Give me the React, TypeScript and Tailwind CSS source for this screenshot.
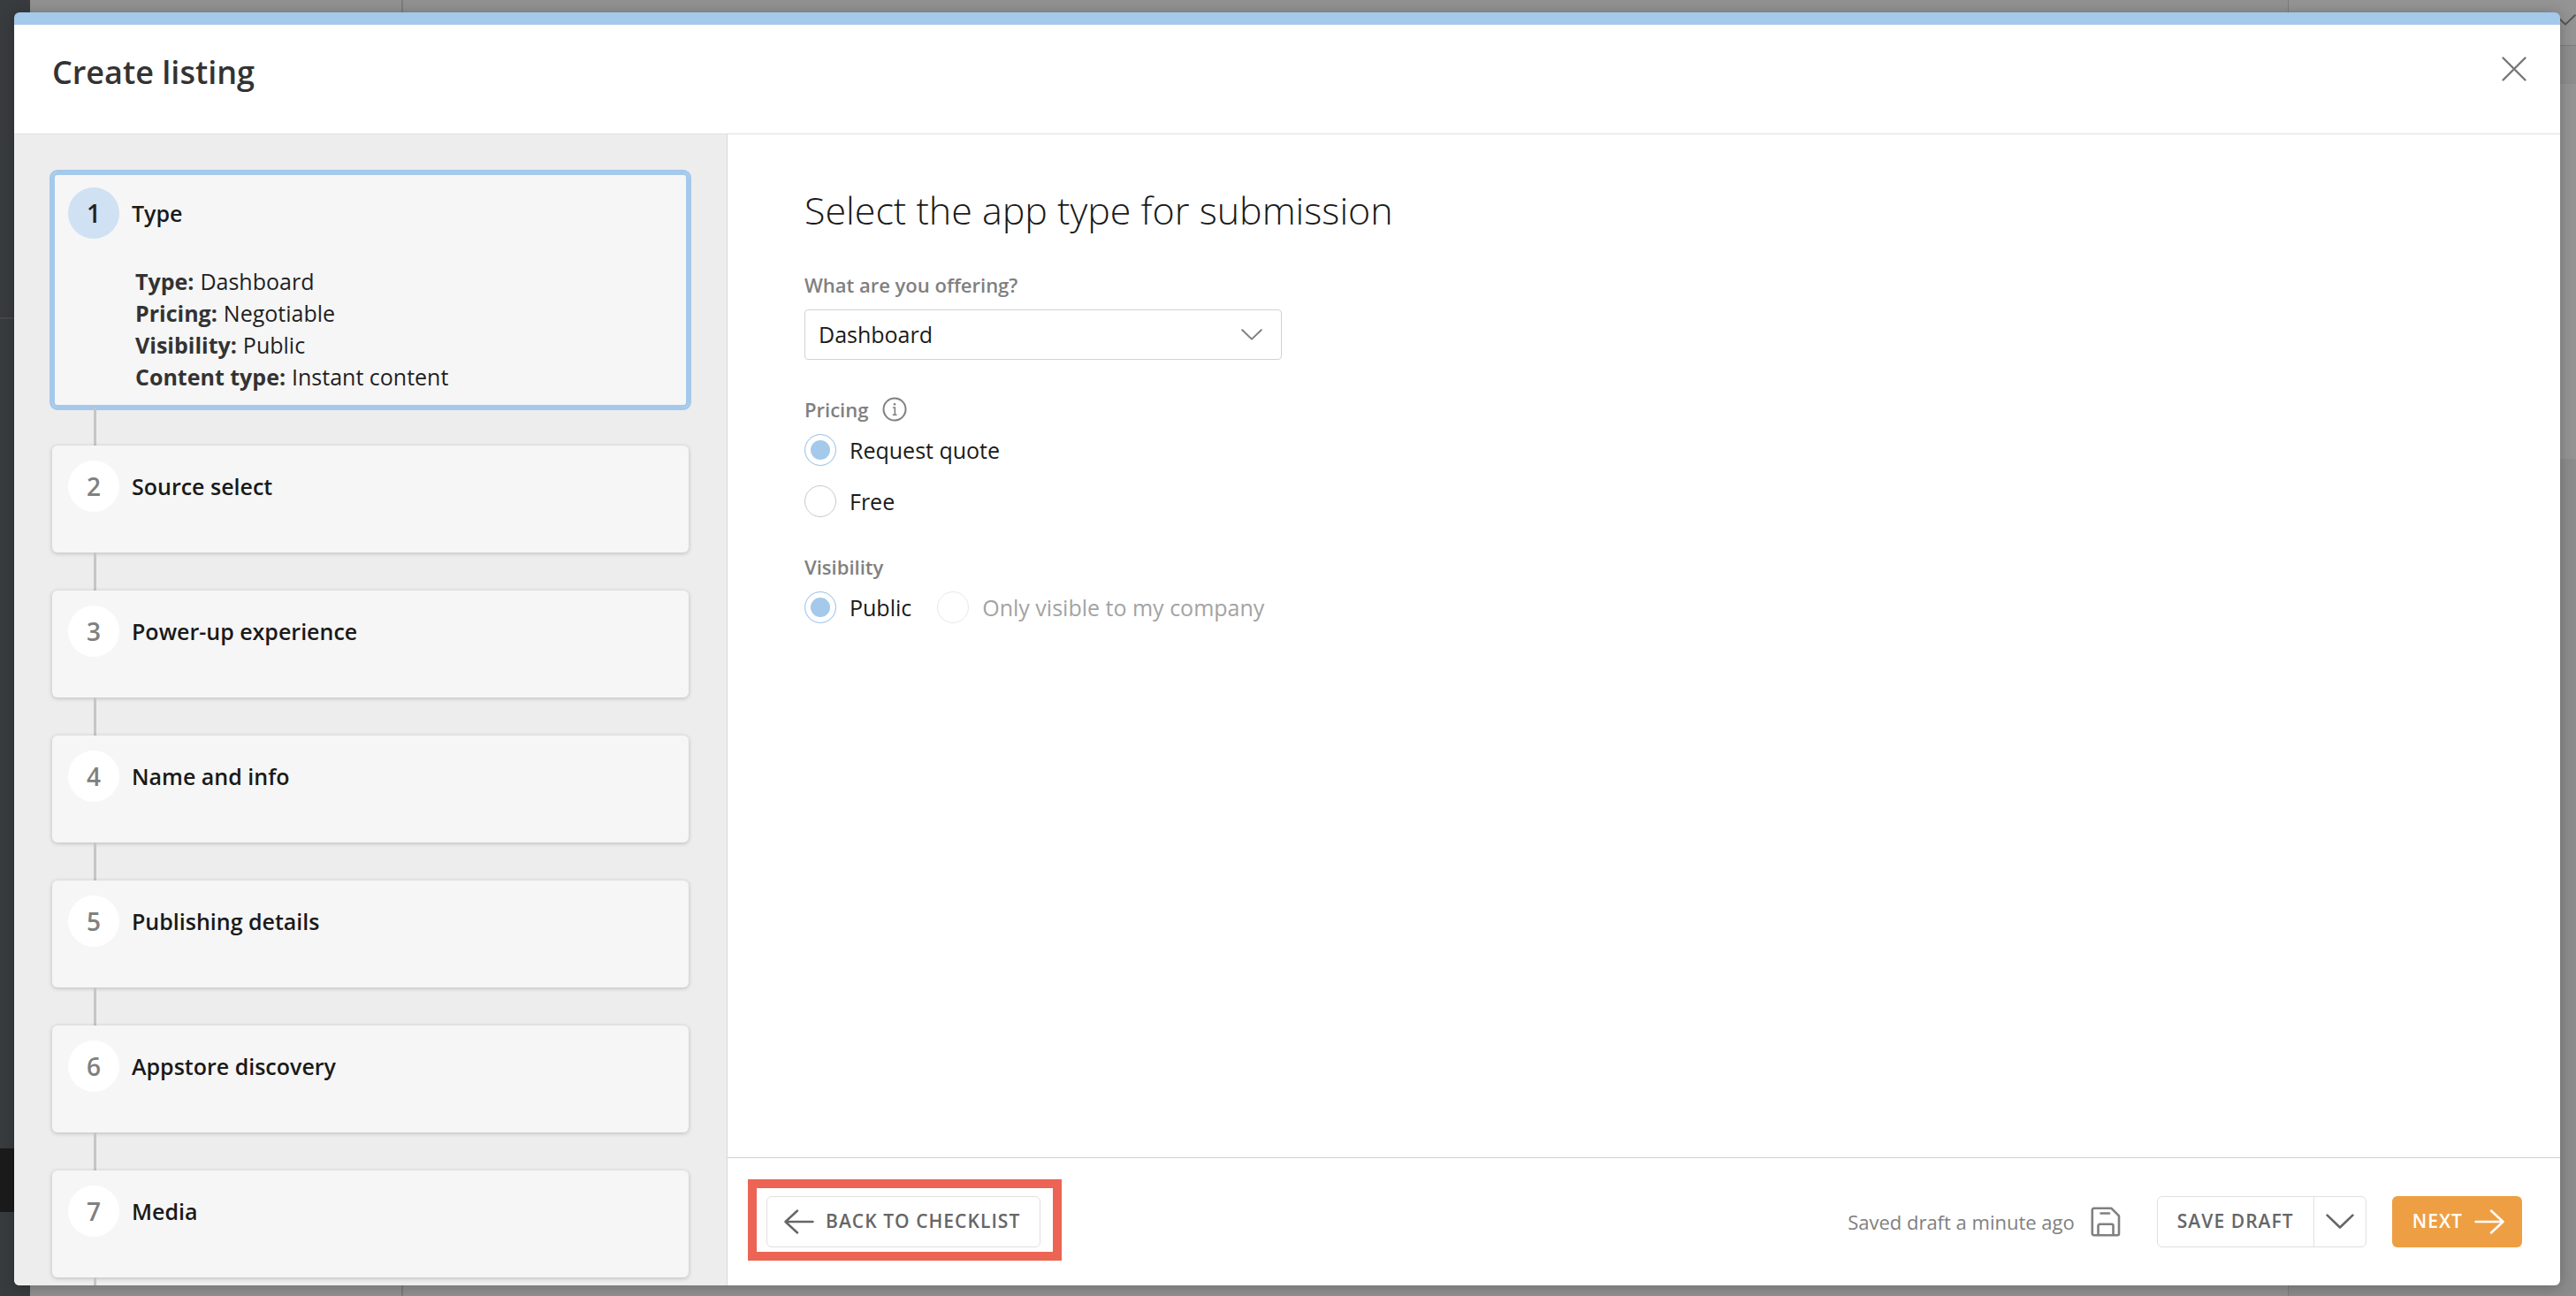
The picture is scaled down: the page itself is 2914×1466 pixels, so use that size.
import { useState, type ReactNode } from "react";

const steps = [
  "Type",
  "Source select",
  "Power-up experience",
  "Name and info",
  "Publishing details",
  "Appstore discovery",
  "Media",
];

const summary = [
  ["Type:", "Dashboard"],
  ["Pricing:", "Negotiable"],
  ["Visibility:", "Public"],
  ["Content type:", "Instant content"],
];

function Chevron({ className }: { className: string }) {
  return (
    <svg viewBox="0 0 30 16" fill="none" stroke="currentColor" strokeWidth="2.5" strokeLinecap="round" strokeLinejoin="round" className={className} aria-hidden="true">
      <path d="M1.5 1.5 15 14.5 28.5 1.5" />
    </svg>
  );
}

function Arrow({ className }: { className: string }) {
  return (
    <svg viewBox="0 0 34 28" fill="none" stroke="currentColor" strokeWidth="2.5" strokeLinecap="round" strokeLinejoin="round" className={className} aria-hidden="true">
      <path d="M1.5 14H32.5M19 1.5 32.5 14 19 26.5" />
    </svg>
  );
}

function InfoIcon() {
  return (
    <svg viewBox="0 0 28 28" fill="none" stroke="currentColor" strokeWidth="2" strokeLinecap="round" className="size-7" aria-hidden="true">
      <circle cx="14" cy="14" r="12.5" />
      <path d="M12.5 12H14.3V20M12.3 20.2H16" strokeWidth="1.6" />
      <circle cx="14" cy="8.3" r="1.3" fill="currentColor" stroke="none" />
    </svg>
  );
}

function DiskIcon() {
  return (
    <svg viewBox="0 0 34 34" fill="none" stroke="currentColor" strokeWidth="2.6" strokeLinecap="round" strokeLinejoin="round" className="size-[34px]" aria-hidden="true">
      <path d="M3.5 1.8H23.5L32 10.3V30.5a1.7 1.7 0 0 1-1.7 1.7H3.5a1.7 1.7 0 0 1-1.7-1.7V3.5a1.7 1.7 0 0 1 1.7-1.7Z" />
      <path d="M8.5 32V21.5a1.7 1.7 0 0 1 1.7-1.7H23.8a1.7 1.7 0 0 1 1.7 1.7V32M11.5 7.5H21" />
    </svg>
  );
}

function Backdrop() {
  return (
    <div className="flex h-full" aria-hidden="true">
      <div className="flex w-[34px] flex-col bg-[#383c3f]">
        <div className="h-[361px] border-b-2 border-[#46494c]" />
        <div className="flex-1" />
        <div className="h-[72px] bg-[#1b1b1b]" />
        <div className="h-[95px]" />
      </div>
      <div className="w-[422px] border-r-2 border-[#7d7d7d] bg-[#919191]" />
      <div className="flex-1 bg-[#919191]" />
      <div className="flex w-[326px] flex-col border-l border-[#7d7d7d] bg-[#949494]">
        <div className="flex h-[52px] items-start justify-end border-b border-[#7d7d7d] pt-4">
          <Chevron className="w-6 text-[#555]" />
        </div>
        <div className="h-[43px] bg-[#8d8d8d]" />
        <div className="h-[424px]" />
        <div className="flex-1 bg-[#8c8c8c]" />
      </div>
    </div>
  );
}

function Radio({ name, label, checked, disabled, onSelect }: { name: string; label: string; checked: boolean; disabled?: boolean; onSelect?: () => void }) {
  return (
    <label className="flex items-center gap-[15px] text-[25px] leading-9 text-[#1a1a1a] has-disabled:text-[#a3a3a3]">
      <input
        type="radio"
        name={name}
        checked={checked}
        disabled={disabled}
        onChange={() => onSelect?.()}
        className="size-9 shrink-0 appearance-none rounded-full border border-[#c8c8c8] bg-white checked:border-[#a4c9eb] checked:bg-[#a4c9eb] checked:shadow-[inset_0_0_0_6px_white] disabled:border-[#e8e8e8]"
      />
      {label}
    </label>
  );
}

function Step({ index, title, active, children }: { index: number; title: string; active?: boolean; children?: ReactNode }) {
  return (
    <li>
      <div
        aria-current={active ? "step" : undefined}
        className={
          active
            ? "rounded-md bg-[#f6f6f6] px-[18px] pt-[17px] pb-[17px] ring-3 ring-[#a4c9eb] inset-ring-3 inset-ring-[#a4c9eb]"
            : "min-h-[121px] rounded-md bg-[#f6f6f6] px-[18px] pt-[17px] shadow-[0_1px_5px_rgba(0,0,0,0.22)]"
        }
      >
        <div className="flex items-center gap-[14px]">
          <span
            className={
              active
                ? "flex size-[58px] items-center justify-center rounded-full bg-[#cfe1f2] text-[28px] font-semibold text-[#222]"
                : "flex size-[58px] items-center justify-center rounded-full bg-white text-[28px] font-semibold text-[#808080]"
            }
          >
            {index}
          </span>
          <h2 className="text-[25px] leading-9 font-semibold text-[#1a1a1a]">{title}</h2>
        </div>
        {children}
      </div>
      <div className="ml-[47px] h-[43px] w-[3px] bg-[#c6c6c6]" />
    </li>
  );
}

export default function App() {
  const [offer, setOffer] = useState("Dashboard");
  const [pricing, setPricing] = useState("quote");

  return (
    <div className="relative h-screen overflow-hidden font-['Open_Sans',sans-serif]">
      <Backdrop />
      <div role="dialog" aria-labelledby="dialog-title" className="absolute top-3.5 right-[18px] bottom-3 left-4 flex flex-col overflow-hidden rounded-md border-t-[14px] border-[#a4c9eb] bg-white shadow-[0_2px_16px_rgba(0,0,0,0.25)]">
        <header className="flex h-[124px] shrink-0 items-start justify-between border-b border-[#dfdfdf] pt-[29px] pr-[37px] pl-[43px]">
          <h1 id="dialog-title" className="text-[36px] leading-[50px] font-semibold text-[#333]">Create listing</h1>
          <button type="button" aria-label="Close" className="mt-1.5 text-[#777]">
            <svg viewBox="0 0 30 30" fill="none" stroke="currentColor" strokeWidth="2.4" strokeLinecap="round" className="size-[30px]">
              <path d="M2.5 2.5 27.5 27.5M27.5 2.5 2.5 27.5" />
            </svg>
          </button>
        </header>

        <div className="flex min-h-0 flex-1">
          <nav aria-label="Steps" className="w-[807px] shrink-0 overflow-hidden border-r border-[#d9d9d9] bg-[#ededed] px-[43px] pt-[43px]">
            <ol>
              {steps.map((title, i) => (
                <Step key={title} index={i + 1} title={title} active={i === 0}>
                  {i === 0 && (
                    <dl className="mt-[30px] pl-[76px] text-[25px] leading-9 text-[#1f1f1f]">
                      {summary.map(([term, value]) => (
                        <div key={term} className="flex gap-[7px]">
                          <dt className="font-bold text-[#333]">{term}</dt>
                          <dd>{value}</dd>
                        </div>
                      ))}
                    </dl>
                  )}
                </Step>
              ))}
            </ol>
          </nav>

          <div className="flex min-w-0 flex-1 flex-col">
            <main className="flex-1 px-[87px] pt-14">
              <h2 className="text-[43px] leading-[60px] font-light text-[#1a1a1a]">Select the app type for submission</h2>

              <label htmlFor="offer" className="mt-[38px] block text-[22px] leading-8 font-semibold text-[#808080]">What are you offering?</label>
              <div className="relative mt-3 w-[540px]">
                <select
                  id="offer"
                  value={offer}
                  onChange={(e) => setOffer(e.target.value)}
                  className="h-[57px] w-full appearance-none rounded-sm border border-[#d2d2d2] bg-white px-[15px] text-[25px] text-[#1a1a1a]"
                >
                  <option>Dashboard</option>
                </select>
                <Chevron className="pointer-events-none absolute top-[22px] right-[22px] w-6 text-[#808080]" />
              </div>

              <fieldset className="mt-10">
                <legend className="flex items-center gap-4 text-[22px] leading-8 font-semibold text-[#808080]">
                  Pricing
                  <InfoIcon />
                </legend>
                <div className="mt-3 flex flex-col gap-[22px]">
                  <Radio name="pricing" label="Request quote" checked={pricing === "quote"} onSelect={() => setPricing("quote")} />
                  <Radio name="pricing" label="Free" checked={pricing === "free"} onSelect={() => setPricing("free")} />
                </div>
              </fieldset>

              <fieldset className="mt-10">
                <legend className="text-[22px] leading-8 font-semibold text-[#808080]">Visibility</legend>
                <div className="mt-3 flex gap-[29px]">
                  <Radio name="visibility" label="Public" checked />
                  <Radio name="visibility" label="Only visible to my company" checked={false} disabled />
                </div>
              </fieldset>
            </main>

            <footer className="flex h-[145px] shrink-0 items-start justify-between border-t border-[#d2d2d2] pt-6 pr-[43px] pl-[23px]">
              <div className="border-10 border-[#ec6454] pt-[9px] pr-[14px] pb-[5px] pl-[11px]">
                <button type="button" className="flex h-[58px] items-center gap-[13px] rounded-md border border-[#e0e0e0] pr-[22px] pl-[19px] text-[21px] font-semibold tracking-wider text-[#666]">
                  <Arrow className="w-[34px] rotate-180" />
                  BACK TO CHECKLIST
                </button>
              </div>

              <div className="mt-[19px] flex items-center">
                <p className="mr-[18px] text-[22px] text-[#808080]">Saved draft a minute ago</p>
                <span className="mr-[41px] text-[#808080]">
                  <DiskIcon />
                </span>
                <div className="mr-[29px] flex h-[58px] rounded-md border border-[#e0e0e0] text-[#666]">
                  <button type="button" className="px-[22px] text-[21px] font-semibold tracking-wider">SAVE DRAFT</button>
                  <button type="button" aria-label="More save options" className="border-l border-[#e0e0e0] px-[13px]">
                    <Chevron className="w-8" />
                  </button>
                </div>
                <button type="button" className="flex h-[58px] items-center gap-[13px] rounded-md bg-[#ee9f44] pr-5 pl-[23px] text-[21px] font-semibold tracking-wider text-white">
                  NEXT
                  <Arrow className="w-[34px]" />
                </button>
              </div>
            </footer>
          </div>
        </div>
      </div>
    </div>
  );
}
